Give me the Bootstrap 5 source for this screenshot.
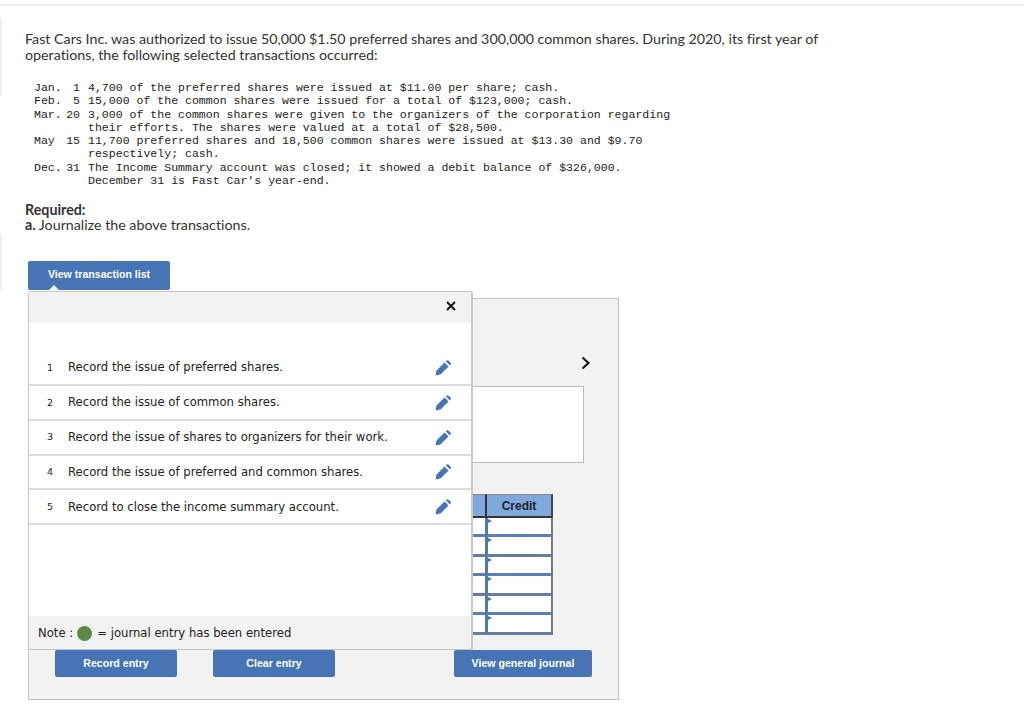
<!DOCTYPE html>
<html lang="en">
<head>
    <meta charset="UTF-8">
    <meta name="viewport" content="width=device-width, initial-scale=1.0">
    <title>Journal entry</title>
    <link href="https://cdn.jsdelivr.net/npm/bootstrap@5.3.0/dist/css/bootstrap.min.css" rel="stylesheet">
    <style>
        body { background: #fff; color: #333; font-family: "Lato", "Liberation Sans", sans-serif; font-variant-ligatures: none; overflow: hidden; }
        .page-wrap { width: 1024px; height: 718px; margin-top: 4px; border-top: 2px solid #efefef; padding: 25px 0 0 25px;
            background: linear-gradient(#f0f0f0, #f0f0f0) 0 11px / 2px 79px no-repeat, linear-gradient(#f0f0f0, #f0f0f0) 0 227px / 2px 57px no-repeat; }
        .intro-text { width: 810px; font-size: 14.25px; line-height: 16px; margin: 0 0 18px; }
        .tx-list { font-family: "Liberation Mono", monospace; font-size: 11.55px; line-height: 13.3px; color: #222; margin-left: 9px; }
        .tx-line { white-space: pre; }
        .tx-date { width: 46px; margin-right: 8px; flex: none; }
        .req-text { font-size: 14.25px; line-height: 15.5px; margin: 14.6px 0 0; }
        .blue-btn { background: #4674b5; color: #fff; font-family: "Liberation Sans", sans-serif; font-size: 10.6px; font-weight: 700; border: 0; border-radius: 2px; height: 27px; padding: 0; }
        .view-btn { width: 142px; height: 29px; margin: 28px 0 0 3px; padding-bottom: 2px; display: block; position: relative; z-index: 3; }
        .view-btn::after { content: ""; position: absolute; left: 20px; bottom: -1px; border: 6px solid transparent; border-top: 0; border-bottom-color: #f2f2f2; }
        .work-panel { position: relative; width: 591px; height: 402px; margin: 8px 0 0 3px; background: #f2f2f2; border: 1px solid #c4c4c4; }
        .next-arrow { position: absolute; right: 28px; top: 57px; }
        .white-box { width: 300px; height: 77px; margin: 87px 0 0 255px; background: #fff; border: 1px solid #bdbdbd; }
        .entry-table { margin: 31px 0 0 191px; width: 333px; border-collapse: separate; border-spacing: 0; table-layout: fixed; font-family: "Liberation Sans", sans-serif; }
        .entry-table th { background: #7fa9dc; height: 24px; padding: 1px 0 0; border-top: 1px solid #8a8a8a; border-bottom: 2px solid #333; font-size: 12px; text-align: center; color: #222; }
        .entry-table th.amt-col { width: 66px; }
        .entry-table th.cr-col { width: 68px; border-left: 2px solid #333; border-right: 2px solid #444; }
        .entry-table td { background: #fff; height: 19.5px; padding: 0; border-bottom: 3px solid #5c7fb4; position: relative; }
        .entry-table tr:nth-child(even) td { border-bottom-color: #687d9e; }
        .entry-table td.cr-cell { border-left: 3px solid #4f78b4; border-right: 2px solid #777; }
        .entry-table td.cr-cell::before { content: ""; position: absolute; left: 0; top: 1px; border-left: 4px solid #4674b5; border-top: 2.5px solid transparent; border-bottom: 2.5px solid transparent; }
        .btn-row { position: absolute; left: 26px; top: 351px; width: 537px; }
        .rec-btn { width: 122px; margin-right: 36px; }
        .gen-btn { width: 138px; margin-left: auto; }
        .tx-popover { position: absolute; left: -1px; top: -8px; width: 445px; height: 359px; background: #fff; border: 1px solid #c8c8c8; border-width: 1px 2px 2px 1px; border-radius: 3px 3px 0 0; z-index: 2; font-family: "DejaVu Sans", sans-serif; font-size: 11.65px; color: #222; }
        .pop-head { height: 31px; background: #f2f2f2; padding: 0 15px 3px 0; }
        .pop-body { height: 293px; padding-top: 28px; }
        .tx-row { height: 34.85px; padding: 1px 20px 0 18px; border-bottom: 2px solid #dcdcdc; }
        .tx-num { width: 21px; font-size: 9.5px; }
        .pop-note { height: 33px; background: #f2f2f2; padding: 3px 0 0 9px; }
        .green-dot { width: 15px; height: 15px; margin: 0 5px 0 4px; border-radius: 50%; background: #5a8a4a; }
    </style>
</head>
<body>
    <div class="page-wrap">
        <p class="intro-text">Fast Cars Inc. was authorized to issue 50,000 $1.50 preferred shares and 300,000 common shares. During 2020, its first year of operations, the following selected transactions occurred:</p>
        <div class="tx-list">
            <div class="tx-line d-flex"><span class="tx-date d-flex justify-content-between"><span>Jan.</span><span>1</span></span><span>4,700 of the preferred shares were issued at $11.00 per share; cash.</span></div>
            <div class="tx-line d-flex"><span class="tx-date d-flex justify-content-between"><span>Feb.</span><span>5</span></span><span>15,000 of the common shares were issued for a total of $123,000; cash.</span></div>
            <div class="tx-line d-flex"><span class="tx-date d-flex justify-content-between"><span>Mar.</span><span>20</span></span><span>3,000 of the common shares were given to the organizers of the corporation regarding
their efforts. The shares were valued at a total of $28,500.</span></div>
            <div class="tx-line d-flex"><span class="tx-date d-flex justify-content-between"><span>May</span><span>15</span></span><span>11,700 preferred shares and 18,500 common shares were issued at $13.30 and $9.70
respectively; cash.</span></div>
            <div class="tx-line d-flex"><span class="tx-date d-flex justify-content-between"><span>Dec.</span><span>31</span></span><span>The Income Summary account was closed; it showed a debit balance of $326,000.
December 31 is Fast Car's year-end.</span></div>
        </div>
        <p class="req-text"><strong>Required:</strong><br><strong>a.</strong> Journalize the above transactions.</p>

        <button class="blue-btn view-btn">View transaction list</button>

        <div class="work-panel">
            <div class="tx-popover">
                <div class="pop-head d-flex justify-content-end align-items-center">
                    <svg width="10" height="10" viewBox="0 0 10 10"><path d="M1 1l8 8M9 1l-8 8" stroke="#111" stroke-width="1.800" fill="none"/></svg>
                </div>
                <div class="pop-body">
                    <div class="tx-row d-flex align-items-center"><span class="tx-num">1</span><span class="flex-grow-1">Record the issue of preferred shares.</span>
                        <svg width="16" height="16" viewBox="0 0 16 16"><path d="M0.500 15.500L1.500 10.500L9.500 2.500L13.500 6.500L5.500 14.500ZM10.800 1.300L11.600 0.500Q12.500 -0.200 13.400 0.500L15.500 2.600Q16.200 3.500 15.500 4.400L14.700 5.200Z" fill="#4674b5"/></svg></div>
                    <div class="tx-row d-flex align-items-center"><span class="tx-num">2</span><span class="flex-grow-1">Record the issue of common shares.</span>
                        <svg width="16" height="16" viewBox="0 0 16 16"><path d="M0.500 15.500L1.500 10.500L9.500 2.500L13.500 6.500L5.500 14.500ZM10.800 1.300L11.600 0.500Q12.500 -0.200 13.400 0.500L15.500 2.600Q16.200 3.500 15.500 4.400L14.700 5.200Z" fill="#4674b5"/></svg></div>
                    <div class="tx-row d-flex align-items-center"><span class="tx-num">3</span><span class="flex-grow-1">Record the issue of shares to organizers for their work.</span>
                        <svg width="16" height="16" viewBox="0 0 16 16"><path d="M0.500 15.500L1.500 10.500L9.500 2.500L13.500 6.500L5.500 14.500ZM10.800 1.300L11.600 0.500Q12.500 -0.200 13.400 0.500L15.500 2.600Q16.200 3.500 15.500 4.400L14.700 5.200Z" fill="#4674b5"/></svg></div>
                    <div class="tx-row d-flex align-items-center"><span class="tx-num">4</span><span class="flex-grow-1">Record the issue of preferred and common shares.</span>
                        <svg width="16" height="16" viewBox="0 0 16 16"><path d="M0.500 15.500L1.500 10.500L9.500 2.500L13.500 6.500L5.500 14.500ZM10.800 1.300L11.600 0.500Q12.500 -0.200 13.400 0.500L15.500 2.600Q16.200 3.500 15.500 4.400L14.700 5.200Z" fill="#4674b5"/></svg></div>
                    <div class="tx-row d-flex align-items-center"><span class="tx-num">5</span><span class="flex-grow-1">Record to close the income summary account.</span>
                        <svg width="16" height="16" viewBox="0 0 16 16"><path d="M0.500 15.500L1.500 10.500L9.500 2.500L13.500 6.500L5.500 14.500ZM10.800 1.300L11.600 0.500Q12.500 -0.200 13.400 0.500L15.500 2.600Q16.200 3.500 15.500 4.400L14.700 5.200Z" fill="#4674b5"/></svg></div>
                </div>
                <div class="pop-note d-flex align-items-center">Note : <span class="green-dot d-inline-block"></span>= journal entry has been entered</div>
            </div>

            <svg class="next-arrow" width="9" height="14" viewBox="0 0 9 14"><path d="M1.500 1.500l6 5.500-6 5.500" stroke="#111" stroke-width="2" fill="none"/></svg>
            <div class="white-box"></div>
            <table class="entry-table">
                <thead><tr><th></th><th class="amt-col">Debit</th><th class="cr-col">Credit</th></tr></thead>
                <tbody>
                    <tr><td></td><td></td><td class="cr-cell"></td></tr>
                    <tr><td></td><td></td><td class="cr-cell"></td></tr>
                    <tr><td></td><td></td><td class="cr-cell"></td></tr>
                    <tr><td></td><td></td><td class="cr-cell"></td></tr>
                    <tr><td></td><td></td><td class="cr-cell"></td></tr>
                    <tr><td></td><td></td><td class="cr-cell"></td></tr>
                </tbody>
            </table>
            <div class="btn-row d-flex">
                <button class="blue-btn rec-btn">Record entry</button>
                <button class="blue-btn rec-btn">Clear entry</button>
                <button class="blue-btn gen-btn">View general journal</button>
            </div>
        </div>
    </div>
    <script src="https://cdn.jsdelivr.net/npm/bootstrap@5.3.0/dist/js/bootstrap.bundle.min.js"></script>
</body>
</html>
